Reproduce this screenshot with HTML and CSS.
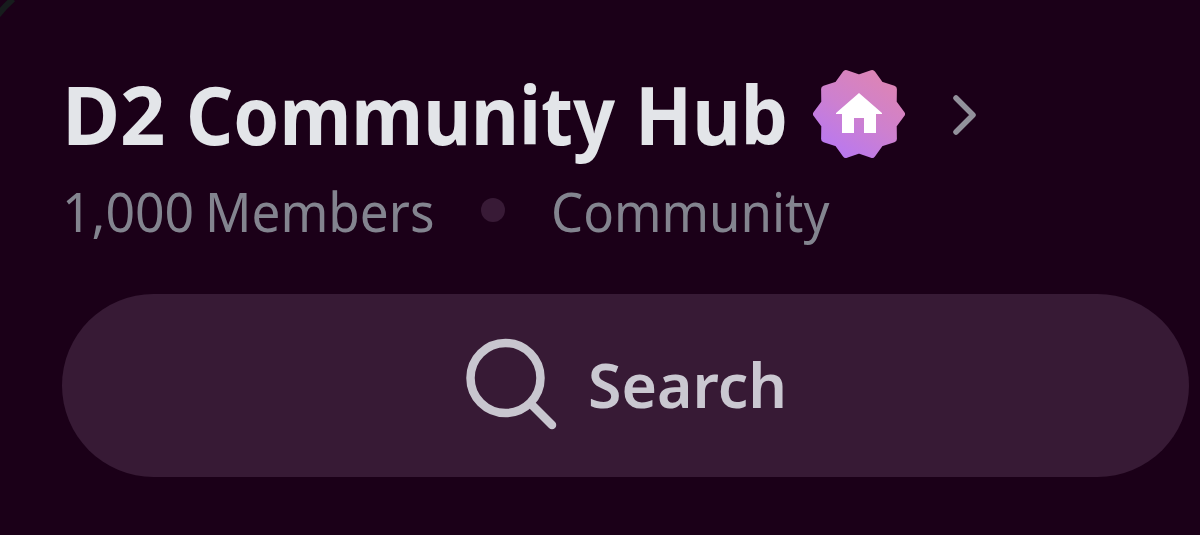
FILE: index.html
```html
<!DOCTYPE html>
<html lang="en">
<head>
<meta charset="utf-8">
<title>D2 Community Hub</title>
<link rel="stylesheet" href="styles.css">
</head>
<body>
<main class="panel">
  <svg class="corner" viewBox="0 0 24 24" aria-hidden="true"><path d="M-2 15Q4 7 13-1"/></svg>
  <header class="heading">
    <h1 class="title"><span class="w-d2">D2</span> <span class="w-community">Community</span> <span class="w-hub">Hub</span></h1>
    <svg class="badge" viewBox="-46 -46 92 92" aria-hidden="true">
      <defs><linearGradient id="badge-fill" gradientUnits="userSpaceOnUse" x1="-26" y1="38" x2="22" y2="-38"><stop offset="0" stop-color="#b978f0"/><stop offset="0.5" stop-color="#cd80cf"/><stop offset="1" stop-color="#dc84b6"/></linearGradient></defs>
      <path class="badge-shape" d="M42.500 0L34.200 11.100L34.400 25L21.200 29.100L13.100 40.400L0 36L-13.100 40.400L-21.200 29.100L-34.400 25L-34.200 11.100L-42.500 0L-34.200-11.100L-34.400-25L-21.200-29.100L-13.100-40.400L0-36L13.100-40.400L21.200-29.100L34.400-25L34.200-11.100Z"/>
      <path class="badge-home" d="M0-21L23-1V0H17V19H5V4H-5V19H-17V0H-23V-1Z"/>
    </svg>
    <svg class="chevron" viewBox="0 0 26 42" aria-hidden="true"><path d="M4 4L21 21L4 38"/></svg>
  </header>
  <p class="meta"><span class="m-count">1,000</span> <span class="m-members">Members</span><i class="dot"></i><span class="m-kind">Community</span></p>
  <button class="search">
    <svg class="search-icon" viewBox="0 0 94 94" aria-hidden="true"><circle cx="40.500" cy="40" r="35"/><path d="M66 66L87 87"/></svg>
    <span class="search-label">Search</span>
  </button>
</main>
</body>
</html>
```
FILE: styles.css
```css
* { box-sizing: border-box; }
body { margin: 0; background: #1b0018; font-family: "Noto Sans", "Open Sans", sans-serif; }
.panel { width: 1200px; height: 535px; padding: 68px 0 0 62px; overflow: hidden; }
.corner { position: absolute; left: 0; top: 0; width: 24px; height: 24px; fill: none; stroke: #171c1d; stroke-width: 6; }
.heading { display: flex; align-items: flex-start; height: 92px; }
.title { display: flex; margin: 0; width: 751px; font-size: 81px; line-height: 92px; font-weight: 700; color: #e3e5e9; white-space: nowrap; }
.title span, .meta span { flex: none; transform-origin: 0 0; }
.title .w-d2 { width: 124px; transform: scaleX(0.98); }
.title .w-community { width: 449px; transform: scaleX(0.91); }
.title .w-hub { transform: scaleX(0.922); }
.badge { width: 92px; height: 92px; flex: none; }
.badge-shape { fill: url(#badge-fill); stroke: url(#badge-fill); stroke-width: 7; stroke-linejoin: round; }
.badge-home { fill: #fff; }
.chevron { width: 26px; height: 42px; margin: 26px 0 0 47px; fill: none; stroke: #92919b; stroke-width: 5.5; stroke-linecap: round; stroke-linejoin: round; }
.meta { display: flex; margin: 16px 0 0; height: 72px; font-size: 55px; line-height: 70px; font-weight: 450; color: #83848f; white-space: nowrap; }
.meta .m-count { width: 143px; transform: scaleX(0.94); }
.meta .m-members { width: 276px; transform: scaleX(0.932); }
.meta .m-kind { transform: scaleX(0.925); }
.dot { width: 24px; height: 24px; margin: 22px 46px 0 0; border-radius: 50%; background: #381a36; }
.search { display: flex; align-items: center; width: 1127px; height: 183px; margin: 46px 0 0; padding: 0 0 0 403px; border: 0; border-radius: 92px; background: #371a35; font-family: inherit; color: #cac8d1; }
.search-icon { width: 94px; height: 94px; margin-top: -2px; flex: none; fill: none; stroke: #c8c6cf; stroke-width: 8.5; stroke-linecap: round; }
.search-label { margin: -4px 0 0 29px; font-size: 62px; line-height: 80px; font-weight: 600; transform: scaleX(0.98); transform-origin: 0 0; }
```
